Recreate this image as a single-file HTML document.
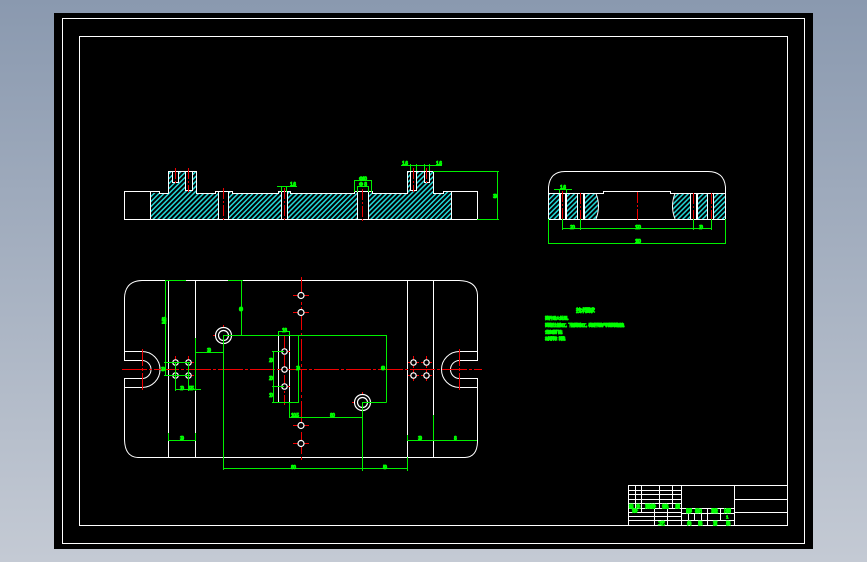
<!DOCTYPE html>
<html lang="zh">
<head>
<meta charset="utf-8">
<title>CAD</title>
<style>
html,body{margin:0;padding:0;width:867px;height:562px;overflow:hidden;background:linear-gradient(180deg,#8a99af 0%,#c4cad4 100%)}
svg{position:absolute;left:0;top:0;display:block}
text{font-family:"Liberation Sans","Noto Sans CJK SC",sans-serif;font-weight:700;fill:#00ff00;stroke:#00ff00;stroke-width:.7}
.w{fill:none;stroke:#fff;stroke-width:1}
.g{fill:none;stroke:#00f000;stroke-width:1}
.r{fill:none;stroke:#f00000;stroke-width:1;stroke-dasharray:11 2 2 2}
.r2{fill:none;stroke:#f00000;stroke-width:1}
.d{font-size:5px}
</style>
</head>
<body>
<svg width="867" height="562" viewBox="0 0 867 562" shape-rendering="crispEdges">
<defs>
<pattern id="h" width="3.500" height="3.500" patternUnits="userSpaceOnUse" patternTransform="rotate(-45)">
<rect width="3.500" height="3.500" fill="#000"/>
<rect y="0" width="3.500" height="1.500" fill="#22d8d8"/>
</pattern>
</defs>
<rect x="54" y="13" width="759" height="536" fill="#000"/>
<rect class="w" x="62.500" y="18.500" width="742" height="525"/>
<rect class="w" x="79.500" y="36.500" width="708" height="489"/>

<!-- front section hatch -->
<path fill="url(#h)" shape-rendering="auto" d="M150.500 219V193H168V171H172V182H178V171H185V190H192V171H196V193H215V191H218V219Z M228 219V191H232V193H278V191H281V219Z M287 219V191H290V193H354V191H357.500V219Z M368 219V191H372V193H407V171H410V190H416V171H424V182H429V171H433V193H443V191H451V219Z"/>
<g class="w">
<path d="M124.500 191.500H159.500V193.500H168.500V171.500H196.500V193.500H215.500V191.500H232.500V193.500H278.500V191.500H290.500V193.500H354.500V191.500H372.500V193.500H407.500V171.500H433.500V193.500H443.500V191.500H477.500V219.500H124.500Z"/>
<path d="M150.500 191.500V219.500M451.500 191.500V219.500"/>
<path d="M218.500 191.500V219.500M228.500 191.500V219.500M281.500 191.500V219.500M287.500 191.500V219.500M357.500 191.500V219.500M368.500 191.500V219.500"/>
<path d="M172.500 171.500V182.500H178.500V171.500M185.500 171.500V190.500H192.500V171.500M410.500 171.500V190.500H416.500V171.500M424.500 171.500V182.500H429.500V171.500"/>
</g>
<g class="r">
<path d="M175.500 168V183" class="r2"/><path d="M188.500 168V192"/><path d="M223.500 188V222"/><path d="M284.500 188V222"/><path d="M362.500 189V222"/><path d="M413.500 168V192"/><path d="M426.500 168V184" class="r2"/>
</g>
<g class="g">
<path d="M277 186.500H297M281.500 186.500V192M286.500 186.500V192"/>
<path d="M354.500 192V180.500H371.500V192M357.500 192V186.500H368.500V192"/>
<path d="M401 165.500H442M410.500 164V171M416.500 164V171M424.500 164V171M429.500 164V171"/>
<path d="M433 171.500H499M477 219.500H499M497.500 171.500V219.500"/>
</g>
<g shape-rendering="auto">
<text class="d" x="290" y="186" textLength="6">1.6</text>
<text class="d" x="359" y="180.500" textLength="8">Φ10</text>
<text class="d" x="359" y="186" textLength="8">Φ8</text>
<text class="d" x="402" y="165" textLength="6">1.6</text>
<text class="d" x="436" y="165" textLength="6">1.6</text>
<text class="d" x="493" y="198" textLength="4">30</text>
</g>

<!-- side section -->
<path fill="url(#h)" shape-rendering="auto" d="M549 193H559V219H549Z M566 193H577V219H566Z M584 193H596Q600 206 596 219H584Z M675 193H690V219H675Q671 206 675 193Z M697 193H707V219H697Z M714 193H725V219H714Z"/>
<g class="w" shape-rendering="auto">
<path d="M548.500 193V187Q550 171.500 565 171.500H708Q724 171.500 725.500 187V193"/>
<path d="M596 193.500Q601 206 596 219M675 193.500Q670 206 675 219"/>
</g>
<g class="w">
<path d="M548.500 193.500H603.500V191.500H670.500V193.500H725.500V219.500H548.500Z"/>
<path d="M559.500 193V219M560.500 193V219M565.500 193V219M566.500 193V219M577.500 193V219M583.500 193V219M584.500 193V219M690.500 193V219M696.500 193V219M697.500 193V219M707.500 193V219M713.500 193V219"/>
</g>
<g class="r">
<path d="M562.500 191V220"/><path d="M580.500 193V220"/><path d="M637.500 192V220"/><path d="M693.500 193V220"/><path d="M711.500 193V220"/>
</g>
<g class="g">
<path d="M554 189.500H572M559.500 189.500V193M566.500 189.500V193"/>
<path d="M562.500 219V230M580.500 219V230M693.500 219V230M711.500 219V230M562.500 228.500H711.500"/>
<path d="M548.500 219V244M725.500 219V244M548.500 243.500H725.500"/>
</g>
<g shape-rendering="auto">
<text class="d" x="560" y="189" textLength="6">1.6</text>
<text class="d" x="570" y="229" textLength="5">20</text>
<text class="d" x="635" y="229" textLength="6">120</text>
<text class="d" x="699" y="229" textLength="4">20</text>
<text class="d" x="635" y="243" textLength="6">180</text>
</g>

<!-- plan view outline -->
<g class="w" shape-rendering="auto">
<path d="M124.500 351V298Q125 281 142 280.500H459Q477 281 477.500 295V351"/>
<path d="M124.500 378.500V440Q125 457 138 457.500H465Q477 457 477.500 442V378.500"/>
<path d="M142 351.500A18 18 0 0 1 142 387.500M142 360.500A9 9 0 0 1 142 378.500"/>
<path d="M459.500 351.500A18 18 0 0 0 459.500 387.500M459.500 360.500A9 9 0 0 0 459.500 378.500"/>
</g>
<g class="w">
<path d="M124.500 351.500H142M124.500 360.500H142M124.500 351V361M124.500 378.500H142M124.500 387.500H142M124.500 378V388"/>
<path d="M459.500 351.500H477.500M459.500 360.500H477.500M477.500 351V361M459.500 378.500H477.500M459.500 387.500H477.500M477.500 378V388"/>
<path d="M168.500 280V457M195.500 280V457M407.500 280V457M433.500 280V457"/>
<path d="M278.500 335V403M289.500 335V403"/>
</g>

<!-- centre lines -->
<path d="M122 369.500H482" fill="none" stroke="#f00000" stroke-dasharray="25 2 3 2"/>
<g class="r">
<path d="M301.500 277V460" stroke-dasharray="22 3 3 3"/>
<path d="M142.500 349V390" stroke-dasharray="17 2 3 2"/>
<path d="M459.500 349V390" stroke-dasharray="17 2 3 2"/>
<path d="M284.500 335V405" stroke-dasharray="14 2 2 2"/>
</g>
<g class="r2">
<path d="M293 295.500H309M293 312.500H309M293 425.500H309M293 443.500H309M301.500 307V319"/>
<path d="M213 335.500H234M223.500 325V346M352 402.500H373M362.500 392V413"/>
<path d="M170 362.500H181M175.500 356V368M183 362.500H194M188.500 356V368M170 375.500H181M175.500 370V381M183 375.500H194M188.500 370V381"/>
<path d="M408 362.500H419M413.500 356V368M421 362.500H432M426.500 356V368M408 375.500H419M413.500 370V381M421 375.500H432M426.500 370V381"/>
<path d="M279 351.500H290M279 369.500H290M279 386.500H290"/>
</g>

<!-- circles -->
<g class="w" shape-rendering="auto" style="stroke-width:1.200">
<circle style="fill:#000" cx="223.500" cy="335.500" r="8"/><circle style="fill:#000" cx="223.500" cy="335.500" r="5"/>
<circle style="fill:#000" cx="362.500" cy="402.500" r="8"/><circle style="fill:#000" cx="362.500" cy="402.500" r="5"/>
<circle style="fill:#000" cx="301" cy="295.500" r="3"/><circle style="fill:#000" cx="301" cy="312.500" r="3"/><circle style="fill:#000" cx="301" cy="425.500" r="3"/><circle style="fill:#000" cx="301" cy="443.500" r="3"/>
<circle style="fill:#000" cx="175.500" cy="362.500" r="2.700"/><circle style="fill:#000" cx="188.500" cy="362.500" r="2.700"/><circle style="fill:#000" cx="175.500" cy="375.500" r="2.700"/><circle style="fill:#000" cx="188.500" cy="375.500" r="2.700"/>
<circle style="fill:#000" cx="413.500" cy="362.500" r="2.700"/><circle style="fill:#000" cx="426.500" cy="362.500" r="2.700"/><circle style="fill:#000" cx="413.500" cy="375.500" r="2.700"/><circle style="fill:#000" cx="426.500" cy="375.500" r="2.700"/>
<circle style="fill:#000" cx="284.500" cy="351.500" r="2.700"/><circle style="fill:#000" cx="284.500" cy="369.500" r="2.700"/><circle style="fill:#000" cx="284.500" cy="386.500" r="2.700"/>
</g>

<!-- plan dims -->
<g class="g">
<path d="M165.500 280V376M165 280.500H186M228 280.500H243M241.500 280V335"/>
<path d="M223.500 335.500H386.500M386.500 335V402.500M362 402.500H386.500M362.500 402V471"/>
<path d="M223.500 335V470M223 468.500H407.500M407.500 457V471M407.500 435V441"/>
<path d="M407 440.500H477M433.500 415V441"/>
<path d="M168.500 433V441M195.500 433V441M168 440.500H196"/>
<path d="M164 362.500H190M164 375.500H190M175.500 362V391M188.500 362V391M175 389.500H201"/>
<path d="M195.500 338V391M195 352.500H223"/>
<path d="M278.500 332V336M289.500 332V336M278 331.500H290"/>
<path d="M273.500 351V403M272 351.500H284M272 386.500H284M272 402.500H299M298.500 335V403"/>
<path d="M289.500 403V418M289 417.500H362"/>
</g>
<g shape-rendering="auto">
<text class="d" x="161" y="325" transform="rotate(-90 163 322)" textLength="7">M16</text>
<text class="d" x="161" y="371" textLength="4">30</text>
<text class="d" x="207" y="352" textLength="4">30</text>
<text class="d" x="239" y="311" textLength="4">60</text>
<text class="d" x="282" y="332" textLength="5">18</text>
<text class="d" x="269" y="362" textLength="4">20</text>
<text class="d" x="269" y="380" textLength="4">20</text>
<text class="d" x="269" y="397" textLength="4">10</text>
<text class="d" x="296" y="370" textLength="4">20</text>
<text class="d" x="381" y="370" textLength="4">60</text>
<text class="d" x="291" y="417" textLength="8">10.5</text>
<text class="d" x="330" y="417" textLength="5">80</text>
<text class="d" x="180" y="390" textLength="4">20</text>
<text class="d" x="188" y="390" textLength="6">12.5</text>
<text class="d" x="180" y="440" textLength="4">30</text>
<text class="d" x="418" y="440" textLength="4">30</text>
<text class="d" x="454" y="440" textLength="3">8</text>
<text class="d" x="291" y="469" textLength="5">80</text>
<text class="d" x="383" y="469" textLength="4">50</text>
</g>

<!-- notes -->
<g shape-rendering="auto">
<text x="576" y="312.500" font-size="5.500" textLength="19">技术要求</text>
<text x="545" y="319.500" font-size="4" textLength="26">铸件退火处理。</text>
<text x="545" y="326.500" font-size="4" textLength="82">铸造后上部加工，下部底面加工，表面不得有气孔等铸造缺陷。</text>
<text x="545" y="333.500" font-size="4" textLength="20">去除毛刺飞边。</text>
<text x="545" y="340" font-size="4" textLength="23">材料牌号：铸铁。</text>
</g>

<!-- title block -->
<g class="w">
<rect x="628.500" y="485.500" width="159" height="40"/>
<path d="M734.500 485V525M734.500 499.500H787.500M734.500 512.500H787.500"/>
<path d="M681.500 485V525"/>
<path d="M628 490.500H681M628 494.500H681M628 499.500H681M628 503.500H681M628 508.500H734M628 512.500H681M628 516.500H681M628 520.500H681"/>
<path d="M635.500 485V512M641.500 485V512M659.500 485V508M672.500 485V508M654.500 508V525M667.500 508V525"/>
<path d="M681 513.500H734M681 520.500H734M688.500 513V521M694.500 513V521M701.500 513V521M707.500 508V525M720.500 508V521"/>
</g>
<g shape-rendering="auto">
<text x="629" y="508" font-size="4.500" textLength="4">标</text>
<text x="636" y="508" font-size="4.500" textLength="4">处</text>
<text x="645" y="508" font-size="4.500" textLength="11">更改文件</text>
<text x="662" y="508" font-size="4.500" textLength="7">签名</text>
<text x="675" y="508" font-size="4.500" textLength="5">日期</text>
<text x="632" y="512" font-size="4" textLength="6">设计</text>
<text x="658" y="525" font-size="4.500" textLength="7">工艺</text>
<text x="686" y="512.500" font-size="4.500" textLength="6">图样</text>
<text x="695" y="512.500" font-size="4.500" textLength="7">标记</text>
<text x="711" y="512.500" font-size="4.500" textLength="7">重量</text>
<text x="724" y="512.500" font-size="4.500" textLength="7">比例</text>
<text x="726" y="518.500" font-size="4.500" textLength="3">1</text>
<text x="687" y="525" font-size="4.500" textLength="3">共</text>
<text x="698" y="525" font-size="4.500" textLength="4">张</text>
<text x="713" y="525" font-size="4.500" textLength="4">第</text>
<text x="726" y="525" font-size="4.500" textLength="3">张</text>
</g>
</svg>
</body>
</html>
